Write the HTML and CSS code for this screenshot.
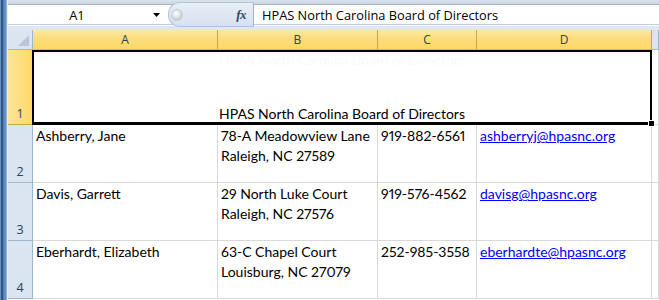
FILE: index.html
```html
<!DOCTYPE html>
<html>

<head>
    <title>HPAS Board of Directors</title>
    <link rel="stylesheet" href="styles.css">
</head>

<body>
    <div class="window">
        <div class="frame"></div>

        <div class="main">
            <div class="ribbon-edge"></div>

            <div class="formula-bar">
                <div class="name-box">
                    <span class="name">A1</span>
                    <svg class="caret" width="8" height="4" viewBox="0 0 8 4"><path d="M0 0h7L3.5 4z" fill="#000"/></svg>
                </div>
                <div class="fx-pill">
                    <span class="knob"></span>
                    <span class="fx">fx</span>
                </div>
                <div class="formula">HPAS North Carolina Board of Directors</div>
            </div>

            <div class="bar-sep"></div>

            <div class="sheet">
                <!-- column headers -->
                <div class="corner"><span class="corner-tri"></span></div>
                <div class="col-head sel">A</div>
                <div class="col-head sel">B</div>
                <div class="col-head sel">C</div>
                <div class="col-head sel">D</div>
                <div class="col-head"></div>

                <!-- row 1 -->
                <div class="row-head sel">1</div>
                <div class="cell merged">
                    <span class="ghost" aria-hidden="true">HPAS North Carolina Board of Directors</span>
                    <span>HPAS North Carolina Board of Directors</span>
                    <span class="fill-handle"></span>
                </div>
                <div class="cell"></div>

                <!-- row 2 -->
                <div class="row-head">2</div>
                <div class="cell">Ashberry, Jane</div>
                <div class="cell">78-A Meadowview Lane<br>Raleigh, NC 27589</div>
                <div class="cell">919-882-6561</div>
                <div class="cell"><a href="#">ashberryj@hpasnc.org</a></div>
                <div class="cell"></div>

                <!-- row 3 -->
                <div class="row-head">3</div>
                <div class="cell">Davis, Garrett</div>
                <div class="cell">29 North Luke Court<br>Raleigh, NC 27576</div>
                <div class="cell">919-576-4562</div>
                <div class="cell"><a href="#">davisg@hpasnc.org</a></div>
                <div class="cell"></div>

                <!-- row 4 -->
                <div class="row-head">4</div>
                <div class="cell">Eberhardt, Elizabeth</div>
                <div class="cell">63-C Chapel Court<br>Louisburg, NC 27079</div>
                <div class="cell">252-985-3558</div>
                <div class="cell"><a href="#">eberhardte@hpasnc.org</a></div>
                <div class="cell"></div>
            </div>
        </div>
    </div>
</body>

</html>
```

FILE: styles.css
```css
:root {
    --grid-line: #d9d9d9;
    --head-blue: #dbe5f1;
    --head-line: #9eb6ce;
    --head-text: #27415f;
    --sel-line: #c9a34e;
    --ui-font: "Open Sans", "Noto Sans", Arial, sans-serif;
    --cell-font: Lato, "Liberation Sans", Arial, sans-serif;
}

* {
    box-sizing: border-box;
    margin: 0;
    padding: 0;
}

body {
    width: 659px;
    height: 300px;
    overflow: hidden;
    background: #fff;
    font-family: var(--cell-font);
}

.window {
    display: flex;
    height: 300px;
}

.frame {
    width: 8px;
    flex-shrink: 0;
    background: linear-gradient(to right, #6f90b8 0, #6f90b8 1px, #2b5687 1px, #2b5687 3px, #4f7db3 3px, #6c95c6 6px, #b9c9dc 7px, #e4ebf4 7px);
}

.main {
    flex: 1;
    display: flex;
    flex-direction: column;
    min-width: 0;
}

/* formula bar */

.ribbon-edge {
    height: 5px;
    background: linear-gradient(#dbe3ee, #c8d4e3);
    border-bottom: 1px solid #a9b8cb;
}

.formula-bar {
    height: 19px;
    display: flex;
    background: #fff;
    font-family: var(--ui-font);
    font-size: 12.8px;
    color: #000;
}

.name-box {
    width: 160px;
    display: flex;
    align-items: center;
}

.name {
    flex: 1;
    text-align: center;
    padding-right: 2px;
}

.caret {
    margin: 1px 7px 0 5px;
}

.fx-pill {
    width: 86px;
    margin: -3px 0 -3px 0;
    display: flex;
    align-items: center;
    justify-content: space-between;
    background: linear-gradient(#e8eef6, #d7e1ee);
    border: 1px solid #b4c3d6;
    border-right-color: #9fb2ca;
    border-radius: 12px 0 0 12px;
    position: relative;
    z-index: 1;
}

.knob {
    width: 12px;
    height: 12px;
    margin-left: 2px;
    border-radius: 50%;
    background: radial-gradient(circle at 40% 35%, #ffffff 0, #dfe3e8 45%, #aab2bd 100%);
    border: 1px solid #c4ccd6;
}

.fx {
    font-family: "Liberation Serif", "DejaVu Serif", serif;
    font-style: italic;
    font-weight: bold;
    font-size: 13px;
    color: #34496b;
    margin-right: 7px;
    letter-spacing: -0.5px;
}

.formula {
    flex: 1;
    padding-left: 8px;
    display: flex;
    align-items: center;
    white-space: nowrap;
}

.bar-sep {
    height: 6px;
    border-top: 1px solid #c3cedc;
    background: linear-gradient(#ffffff 0, #ffffff 1px, #dfe7f1 1px);
}

/* sheet */

.sheet {
    display: grid;
    grid-template-columns: 25px 185px 160px 99px 175px 1fr;
    grid-template-rows: 20px 75px 58px 58px 58px;
    flex: 1;
}

.corner {
    background: var(--head-blue);
    border-right: 1px solid var(--head-line);
    border-bottom: 1px solid var(--head-line);
    position: relative;
}

.corner-tri {
    position: absolute;
    right: 3px;
    bottom: 3px;
    width: 0;
    height: 0;
    border-left: 11px solid transparent;
    border-bottom: 11px solid #b7c6d9;
}

.col-head {
    display: flex;
    align-items: center;
    justify-content: center;
    font-family: var(--ui-font);
    font-size: 12px;
    color: var(--head-text);
    background: var(--head-blue);
    border-right: 1px solid var(--head-line);
    border-bottom: 1px solid var(--head-line);
}

.col-head.sel {
    background: linear-gradient(#fde9a6 0, #fcdc7c 45%, #ffd965 100%);
    border-right-color: var(--sel-line);
    border-bottom-color: #f2b43c;
}

.row-head {
    display: flex;
    align-items: flex-end;
    justify-content: center;
    padding-bottom: 2px;
    font-family: var(--ui-font);
    font-size: 12.5px;
    color: var(--head-text);
    background: var(--head-blue);
    border-right: 1px solid var(--head-line);
    border-bottom: 1px solid var(--head-line);
}

.row-head.sel {
    background: linear-gradient(to right, #fde39a, #ffd966);
    border-right-color: #f2b43c;
    border-bottom-color: var(--sel-line);
}

.cell {
    padding: 1px 0 0 3px;
    font-size: 14px;
    font-variant-numeric: proportional-nums;
    line-height: 20px;
    color: #000;
    white-space: nowrap;
    overflow: hidden;
    border-right: 1px solid var(--grid-line);
    border-bottom: 1px solid var(--grid-line);
}

.cell a {
    color: #0000ff;
    text-decoration: underline;
}

.merged {
    grid-column: 2 / 6;
    position: relative;
    overflow: visible;
    display: flex;
    flex-direction: column;
    justify-content: space-between;
    align-items: center;
    padding: 0;
    line-height: 16px;
    border: 2px solid #000;
    border-bottom-width: 3px;
    margin-left: -1px;
}

.ghost {
    color: #fafafa;
}

.fill-handle {
    position: absolute;
    right: -5px;
    bottom: -5px;
    width: 7px;
    height: 7px;
    background: #000;
    border: 1px solid #fff;
}
```
